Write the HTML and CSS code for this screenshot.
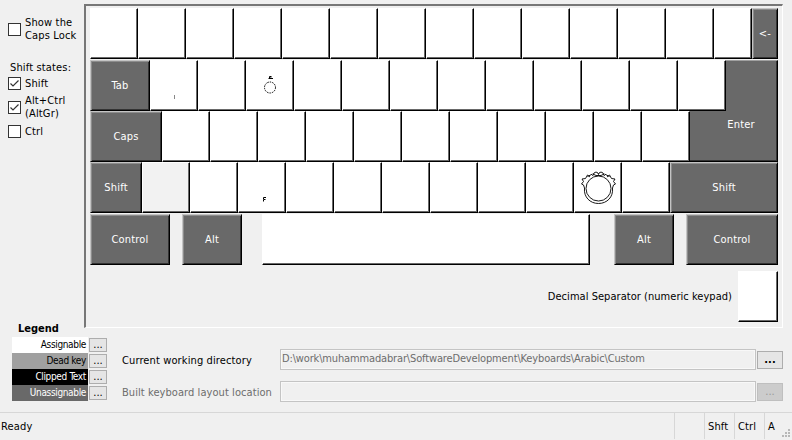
FILE: index.html
```html
<!DOCTYPE html>
<html lang="en">
<head>
<meta charset="utf-8">
<title>Keyboard Layout</title>
<link rel="stylesheet" href="styles.css">
</head>
<body>
<main class="window">
  <div class="upper">
    <aside class="side">
      <div class="options">
        <label class="check caps-option"><i class="box"></i><span>Show the<br>Caps Lock</span></label>
        <div class="states">Shift states:</div>
        <label class="check"><i class="box"><svg viewBox="0 0 13 13"><path d="M2.500 6.500 5 9l5.500-5.500"/></svg></i><span>Shift</span></label>
        <label class="check altgr"><i class="box"><svg viewBox="0 0 13 13"><path d="M2.500 6.500 5 9l5.500-5.500"/></svg></i><span>Alt+Ctrl<br>(AltGr)</span></label>
        <label class="check"><i class="box"></i><span>Ctrl</span></label>
      </div>
      <h2 class="legend-title">Legend</h2>
    </aside>
    <section class="keyboard">
      <div class="row r1">
        <b class="key"></b><b class="key"></b><b class="key"></b><b class="key"></b><b class="key"></b><b class="key"></b><b class="key"></b><b class="key"></b><b class="key"></b><b class="key"></b><b class="key"></b><b class="key"></b><b class="key"></b><b class="key narrow"></b><b class="key dark grow">&lt;-</b>
      </div>
      <div class="row r2">
        <b class="key dark tab">Tab</b><b class="key"><svg class="glyph" viewBox="0 0 46 49"><path class="faint" d="M23.500 34v4"/></svg></b><b class="key"></b><b class="key"><svg class="glyph" viewBox="0 0 46 49"><circle class="dotted" cx="23" cy="26.500" r="5.500"/><path d="M24.500 15.500h-2v1.500h2M21.500 17.500h4.500"/></svg></b><b class="key"></b><b class="key"></b><b class="key"></b><b class="key"></b><b class="key"></b><b class="key"></b><b class="key"></b><b class="key"></b><b class="key"></b><b class="enter-top"></b>
      </div>
      <div class="row">
        <b class="key dark caps">Caps</b><b class="key"></b><b class="key"></b><b class="key"></b><b class="key"></b><b class="key"></b><b class="key"></b><b class="key"></b><b class="key"></b><b class="key"></b><b class="key"></b><b class="key"></b><b class="enter-base">Enter</b>
      </div>
      <div class="row r4">
        <b class="key dark shift">Shift</b><b class="key pressed"></b><b class="key"></b><b class="key"><svg class="glyph" viewBox="0 0 46 49"><path d="M27 34.500h-2.500v2h2M24.500 37v1.500"/></svg></b><b class="key"></b><b class="key"></b><b class="key"></b><b class="key"></b><b class="key"></b><b class="key"></b><b class="key"><svg class="glyph ring" viewBox="0 0 46 49"><circle cx="23.500" cy="25.500" r="12.500"/><path d="M9.500 25C8.500 34 15 40.500 23.500 40.500S38.500 34 37.500 25M9.500 25l-1-3-2-1 2-2.500-1.500-2.500 3.500-.5 2-3.500 2.500 2M37.500 25l1-3 2-1-2-2.500 1.500-2.500-3.500-.5-2-3.500-2.500 2M12.500 13.500l5-2.500M34.500 13.500l-5-2.500M17.500 13l1.500-3 2-1 2 1 .5 1.500L24 10l2-1 2 1 1.500 3M18 11l3 1.500h5l3-1.500"/></svg></b><b class="key"></b><b class="key dark grow">Shift</b>
      </div>
      <div class="row r5">
        <b class="key dark control">Control</b><b class="key dark alt">Alt</b><b class="key space"></b><b class="key dark alt right">Alt</b><b class="key dark grow">Control</b>
      </div>
      <div class="decimal"><span>Decimal Separator (numeric keypad)</span><b class="key"></b></div>
    </section>
  </div>
  <section class="lower">
    <div class="legend">
      <div><span class="swatch assignable">Assignable</span><button>...</button></div>
      <div><span class="swatch dead">Dead key</span><button>...</button></div>
      <div><span class="swatch clipped">Clipped Text</span><button>...</button></div>
      <div><span class="swatch unassignable">Unassignable</span><button>...</button></div>
    </div>
    <div class="paths">
      <div class="field"><span class="cwd">Current working directory</span><div class="input"><span>D:\work\muhammadabrar\SoftwareDevelopment\Keyboards\Arabic\Custom</span></div><button>...</button></div>
      <div class="field disabled"><span class="built">Built keyboard layout location</span><div class="input"></div><button>...</button></div>
    </div>
  </section>
  <footer class="status"><span class="ready">Ready</span><span class="pane"></span><span class="pane">Shft</span><span class="pane">Ctrl</span><span class="pane last">A</span><svg class="grip" viewBox="0 0 10 10"><path d="M7 0h2v2H7zM4 3h2v2H4zM7 3h2v2H7zM1 6h2v2H1zM4 6h2v2H4zM7 6h2v2H7z"/></svg></footer>
</main>
</body>
</html>
```
FILE: styles.css
```css
* { box-sizing: border-box; }
body { margin: 0; background: #f0f0f0; color: #000; font: 11px/13px "DejaVu Sans Condensed", "DejaVu Sans", sans-serif; font-stretch: condensed; }
.window { width: 792px; height: 440px; display: flex; flex-direction: column; overflow: hidden; }
.upper { display: flex; height: 336px; padding-top: 4px; }
.side { width: 84px; display: flex; flex-direction: column; justify-content: space-between; white-space: nowrap; letter-spacing: .15px; }
.options { padding: 12px 0 0 8px; }
.check { display: flex; align-items: center; gap: 4px; height: 16px; }
.caps-option { height: 26px; }
.altgr { height: 26px; margin: 3px 0; }
.altgr + .check { margin-top: 3px; }
.states { margin: 19px 0 1px 2px; }
.box { width: 13px; height: 13px; border: 1px solid #333; background: #fff; flex: none; }
.box svg { display: block; width: 13px; height: 13px; margin: -1px; fill: none; stroke: #333; stroke-width: 1.2; }
.legend-title { margin: 0 0 0 18px; font-size: 11px; line-height: 14px; letter-spacing: 0; }
.keyboard { width: 699px; height: 324px; border: 1px solid #fff; border-top: 2px solid #777; border-left: 2px solid #777; padding: 2px 4px; }
.row { display: flex; height: 51px; letter-spacing: .2px; }
.r1, .r4 { margin-bottom: 1px; }
.key { flex: none; width: 48px; height: 51px; background: #fff; border: 1px solid #fff; border-right-color: #000; border-bottom-color: #000; box-shadow: inset -1px -1px #696969; display: flex; align-items: center; justify-content: center; font-weight: normal; }
.dark, .enter-top, .enter-base { background: #696969; color: #fff; }
.dark { border-top-color: #c4c4c4; border-left-color: #c4c4c4; box-shadow: inset 1px 1px #8c8c8c, inset -1px -1px #333; }
.grow { flex: 1; width: auto; }
.narrow { width: 38px; }
.tab { width: 60px; }
.caps { width: 72px; }
.shift { width: 52px; }
.pressed { background: #f2f2f2; }
.control { width: 80px; margin-right: 12px; }
.alt { width: 60px; }
.space { width: 328px; margin: 0 24px 0 20px; }
.alt.right { margin-right: 12px; }
.enter-top { flex: 1; border-top: 1px solid #a0a0a0; border-right: 1px solid #000; box-shadow: inset -1px 0 #333; }
.enter-base { flex: 1; border-right: 1px solid #000; border-bottom: 1px solid #000; box-shadow: inset -1px -1px #333; padding: 7px 0 0 15px; text-align: center; font-weight: normal; }
.glyph { width: 46px; height: 49px; flex: none; fill: none; stroke: #000; stroke-width: 1; }
.glyph .dotted { stroke-dasharray: 1.500 1; }
.glyph .faint { stroke: #888; }
.ring { stroke-width: .9; }
.decimal { display: flex; justify-content: flex-end; align-items: center; gap: 6px; margin-top: 6px; letter-spacing: .04px; }
.decimal .key { width: 40px; }
.lower { display: flex; height: 76px; padding-left: 12px; }
.legend { width: 110px; padding-top: 1px; }
.legend div { display: flex; height: 16px; gap: 1px; }
.swatch { width: 76px; height: 16px; padding-right: 2px; font-size: 10px; line-height: 16px; letter-spacing: -.35px; text-align: right; white-space: nowrap; }
.assignable { background: #fff; }
.dead { background: #a0a0a0; }
.clipped { background: #000; color: #fff; }
.unassignable { background: #696969; color: #fff; }
button { font: inherit; padding: 0; color: #000; background: #e5e5e5; border: 1px solid #adadad; }
.legend button { width: 18px; height: 14px; margin-top: 1px; line-height: 10px; }
.paths { padding-top: 13px; }
.field { display: flex; height: 21px; margin-bottom: 11px; align-items: center; white-space: nowrap; }
.field > span { width: 158px; padding-top: 1px; }
.cwd { letter-spacing: .12px; }
.built { letter-spacing: .07px; }
.input { width: 476px; height: 21px; border: 1px solid #c4c4c4; box-shadow: inset 0 0 0 1px #f8f8f8; color: #6d6d6d; line-height: 18px; padding-left: 1px; letter-spacing: -.15px; }
.field button { width: 26px; height: 18px; margin-left: 1px; font-weight: bold; line-height: 14px; }
.disabled { color: #6d6d6d; }
.disabled button { background: #ccc; border-color: #bfbfbf; color: #999; font-weight: normal; }
.status { display: flex; height: 28px; border-top: 1px solid #d7d7d7; line-height: 28px; position: relative; letter-spacing: .15px; }
.ready { width: 674px; padding-left: 1px; }
.pane { width: 30px; height: 26px; border-left: 1px solid #d7d7d7; padding-left: 3px; }
.last { width: 28px; }
.grip { position: absolute; right: 1px; bottom: 1px; width: 10px; height: 10px; fill: #b8b8b8; }
```
